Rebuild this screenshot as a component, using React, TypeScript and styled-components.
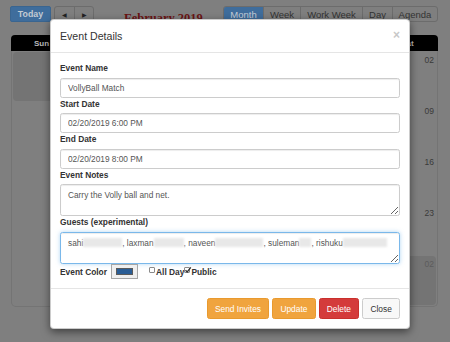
import React from 'react'
import styled, { createGlobalStyle } from 'styled-components'

const GlobalStyle = createGlobalStyle`
  html, body {
    margin: 0;
    padding: 0;
    background: #7f7f7f;
    overflow: hidden;
  }
  body {
    font-family: "Liberation Sans", Arial, sans-serif;
    color: #333;
  }
  * { box-sizing: border-box; }
`

const Page = styled.div`
  position: relative;
  width: 450px;
  height: 342px;
  padding: 6px 12px 0 10px;
`

const Toolbar = styled.div`
  display: flex;
  align-items: center;
  height: 16px;
`

const TodayButton = styled.div`
  width: 41px;
  height: 16px;
  display: flex;
  align-items: center;
  justify-content: center;
  background: #3f6d9c;
  border: 1px solid #3a6590;
  border-radius: 2px;
  color: #c3cad3;
  font-size: 8.8px;
  font-weight: bold;
`

const ButtonGroup = styled.div<{ $left?: number }>`
  display: flex;
  height: 16px;
  margin-left: ${({ $left }) => $left ?? 0}px;
  border: 1px solid #6c6c6c;
  border-radius: 3px;
  overflow: hidden;
`

const GroupButton = styled.div<{ $width: number; $active?: boolean }>`
  width: ${({ $width }) => $width}px;
  display: flex;
  align-items: center;
  justify-content: center;
  font-size: 9.5px;
  color: ${({ $active }) => ($active ? '#c4ccd6' : '#333')};
  background: ${({ $active }) => ($active ? '#3f6d9c' : 'transparent')};
  & + & {
    border-left: 1px solid #6c6c6c;
  }
`

const Arrow = styled.span`
  font-size: 6px;
  color: #222;
`

const MonthTitle = styled.div`
  margin-left: 30px;
  margin-top: 9px;
  font-family: "Liberation Serif", serif;
  font-weight: bold;
  font-size: 12.5px;
  color: #6a1414;
`

const Calendar = styled.div`
  margin: 13px 0 0 1px;
`

const CalendarHead = styled.div`
  display: grid;
  grid-template-columns: repeat(7, 1fr);
  height: 16px;
  background: #000;
  border-radius: 4px 4px 0 0;
`

const HeadCell = styled.div`
  display: flex;
  align-items: center;
  justify-content: center;
  color: #b9b9b9;
  font-size: 8px;
  font-weight: bold;
`

const CalendarBody = styled.div`
  display: grid;
  grid-template-columns: repeat(7, 1fr);
  grid-auto-rows: 51px;
  border: 1px solid #747474;
  border-top: none;
  border-radius: 0 0 5px 5px;
`

const DayCell = styled.div<{ $off?: boolean }>`
  margin: 1px;
  padding: 3px 2px 0 0;
  text-align: right;
  font-size: 8.5px;
  color: ${({ $off }) => ($off ? '#5c5c5c' : '#3a3a3a')};
  background: ${({ $off }) => ($off ? '#747474' : 'transparent')};
  border-radius: 4px;
`

const ModalLayer = styled.div`
  position: absolute;
  inset: 0;
  padding: 19px 0 0 50px;
`

const Dialog = styled.div`
  width: 360px;
  background: #fff;
  border: 1px solid rgba(0, 0, 0, 0.2);
  border-radius: 4px;
  box-shadow: 0 3px 9px rgba(0, 0, 0, 0.5);
`

const DialogHeader = styled.div`
  display: flex;
  align-items: center;
  justify-content: space-between;
  height: 33px;
  padding: 0 9px;
  border-bottom: 1px solid #e5e5e5;
`

const DialogTitle = styled.div`
  font-size: 10.6px;
  color: #333;
`

const CloseX = styled.span`
  font-size: 12px;
  font-weight: bold;
  color: #c8c8c8;
  margin-top: -2px;
`

const DialogBody = styled.div`
  padding: 9px;
`

const FieldLabel = styled.div`
  font-size: 8.4px;
  font-weight: bold;
  line-height: 12.5px;
  color: #333;
  margin-bottom: 3px;
`

const TextInput = styled.input`
  display: block;
  width: 100%;
  height: 20px;
  padding: 3px 7px;
  font-family: inherit;
  font-size: 8.3px;
  color: #555;
  border: 1px solid #ccc;
  border-radius: 2.5px;
  box-shadow: inset 0 1px 1px rgba(0, 0, 0, 0.075);
  outline: none;
`

const TextArea = styled.textarea`
  display: block;
  width: 100%;
  height: 32px;
  padding: 3.5px 7px;
  font-family: inherit;
  font-size: 8.3px;
  line-height: 12px;
  color: #555;
  border: 1px solid #ccc;
  border-radius: 2.5px;
  box-shadow: inset 0 1px 1px rgba(0, 0, 0, 0.075);
  outline: none;
  resize: vertical;
`

const GuestBox = styled.div`
  width: 100%;
  height: 32px;
  padding: 4px 7px;
  font-size: 8.3px;
  line-height: 12px;
  color: #555;
  border: 1px solid #7ab8ea;
  border-radius: 2.5px;
  box-shadow: inset 0 1px 1px rgba(0, 0, 0, 0.075), 0 0 4px rgba(102, 175, 233, 0.5);
  overflow: hidden;
  resize: vertical;
  white-space: nowrap;
`

const Redacted = styled.span<{ $width: number }>`
  display: inline-block;
  vertical-align: middle;
  width: ${({ $width }) => $width}px;
  height: 9px;
  margin-top: -2px;
  background: #e8e8e8;
  filter: blur(1px);
`

const OptionsRow = styled.div`
  display: flex;
  align-items: center;
  height: 15px;
  margin-top: 0.5px;
  font-size: 8.4px;
  font-weight: bold;
`

const ColorWell = styled.div`
  width: 27px;
  height: 15px;
  margin: 0 11px 0 4px;
  padding: 3px 4px;
  background: #efefef;
  border: 1px solid #a6a6a6;
`

const Swatch = styled.div<{ $color: string }>`
  width: 100%;
  height: 100%;
  background: ${({ $color }) => $color};
  border: 1px solid #5a5a5a;
`

const CheckBox = styled.span`
  position: relative;
  width: 6px;
  height: 6px;
  margin: -4px 1px 0 0;
  background: #fff;
  border: 1px solid #8a8a8a;
  border-radius: 1px;
  svg {
    position: absolute;
    left: -1px;
    top: -2px;
  }
`

const CheckLabel = styled.label`
  display: flex;
  align-items: center;
`

const DialogFooter = styled.div`
  display: flex;
  justify-content: flex-end;
  gap: 3px;
  padding: 9px;
  border-top: 1px solid #e5e5e5;
`

const tones = {
  warning: { bg: '#f0a43e', border: '#e99a2e', color: '#fff' },
  danger: { bg: '#d43b3b', border: '#c9302c', color: '#fff' },
  plain: { bg: '#f8f8f8', border: '#ccc', color: '#333' },
}

const FooterButton = styled.div<{ $tone: keyof typeof tones }>`
  height: 21px;
  padding: 0 7.2px;
  display: flex;
  align-items: center;
  font-size: 8.4px;
  border-radius: 2.5px;
  background: ${({ $tone }) => tones[$tone].bg};
  border: 1px solid ${({ $tone }) => tones[$tone].border};
  color: ${({ $tone }) => tones[$tone].color};
`

const weekdays = ['Sun', 'Mon', 'Tue', 'Wed', 'Thu', 'Fri', 'Sat']

const weeks = [
  ['27', '28', '29', '30', '31', '01', '02'],
  ['03', '04', '05', '06', '07', '08', '09'],
  ['10', '11', '12', '13', '14', '15', '16'],
  ['17', '18', '19', '20', '21', '22', '23'],
  ['24', '25', '26', '27', '28', '01', '02'],
]

const isOff = (week: number, day: number) => (week === 0 && day < 5) || (week === 4 && day > 2)

function Tick({ checked }: { checked?: boolean }) {
  return (
    <CheckBox>
      {checked && (
        <svg width="8" height="8" viewBox="0 0 8 8">
          <path d="M1.5 4.2 L3.2 6 L6.8 1.4" fill="none" stroke="#333" strokeWidth="1.3" />
        </svg>
      )}
    </CheckBox>
  )
}

export default function App() {
  return (
    <Page>
      <GlobalStyle />
      <Toolbar>
        <TodayButton>Today</TodayButton>
        <ButtonGroup $left={3}>
          <GroupButton $width={19}><Arrow>◀</Arrow></GroupButton>
          <GroupButton $width={19}><Arrow>▶</Arrow></GroupButton>
        </ButtonGroup>
        <MonthTitle>February 2019</MonthTitle>
        <ButtonGroup style={{ marginLeft: 'auto' }}>
          <GroupButton $width={39} $active>Month</GroupButton>
          <GroupButton $width={37}>Week</GroupButton>
          <GroupButton $width={62}>Work Week</GroupButton>
          <GroupButton $width={30}>Day</GroupButton>
          <GroupButton $width={45}>Agenda</GroupButton>
        </ButtonGroup>
      </Toolbar>

      <Calendar>
        <CalendarHead>
          {weekdays.map((d) => (
            <HeadCell key={d}>{d}</HeadCell>
          ))}
        </CalendarHead>
        <CalendarBody>
          {weeks.map((week, w) =>
            week.map((day, d) => (
              <DayCell key={`${w}-${d}`} $off={isOff(w, d)}>
                {day}
              </DayCell>
            ))
          )}
        </CalendarBody>
      </Calendar>

      <ModalLayer>
        <Dialog>
          <DialogHeader>
            <DialogTitle>Event Details</DialogTitle>
            <CloseX>×</CloseX>
          </DialogHeader>
          <DialogBody>
            <FieldLabel>Event Name</FieldLabel>
            <TextInput readOnly defaultValue="VollyBall Match" />
            <FieldLabel>Start Date</FieldLabel>
            <TextInput readOnly defaultValue="02/20/2019 6:00 PM" />
            <FieldLabel>End Date</FieldLabel>
            <TextInput readOnly defaultValue="02/20/2019 8:00 PM" />
            <FieldLabel>Event Notes</FieldLabel>
            <TextArea readOnly defaultValue="Carry the Volly ball and net." />
            <FieldLabel>Guests (experimental)</FieldLabel>
            <GuestBox>
              sahi<Redacted $width={39} />, laxman<Redacted $width={30} />, naveen
              <Redacted $width={48} />, suleman<Redacted $width={12} />, rishuku
              <Redacted $width={44} />
            </GuestBox>
            <OptionsRow>
              Event Color
              <ColorWell>
                <Swatch $color="#2a5d95" />
              </ColorWell>
              <CheckLabel>
                <Tick />
                All Day
              </CheckLabel>
              <CheckLabel>
                <Tick checked />
                Public
              </CheckLabel>
            </OptionsRow>
          </DialogBody>
          <DialogFooter>
            <FooterButton $tone="warning">Send Invites</FooterButton>
            <FooterButton $tone="warning">Update</FooterButton>
            <FooterButton $tone="danger">Delete</FooterButton>
            <FooterButton $tone="plain">Close</FooterButton>
          </DialogFooter>
        </Dialog>
      </ModalLayer>
    </Page>
  )
}
